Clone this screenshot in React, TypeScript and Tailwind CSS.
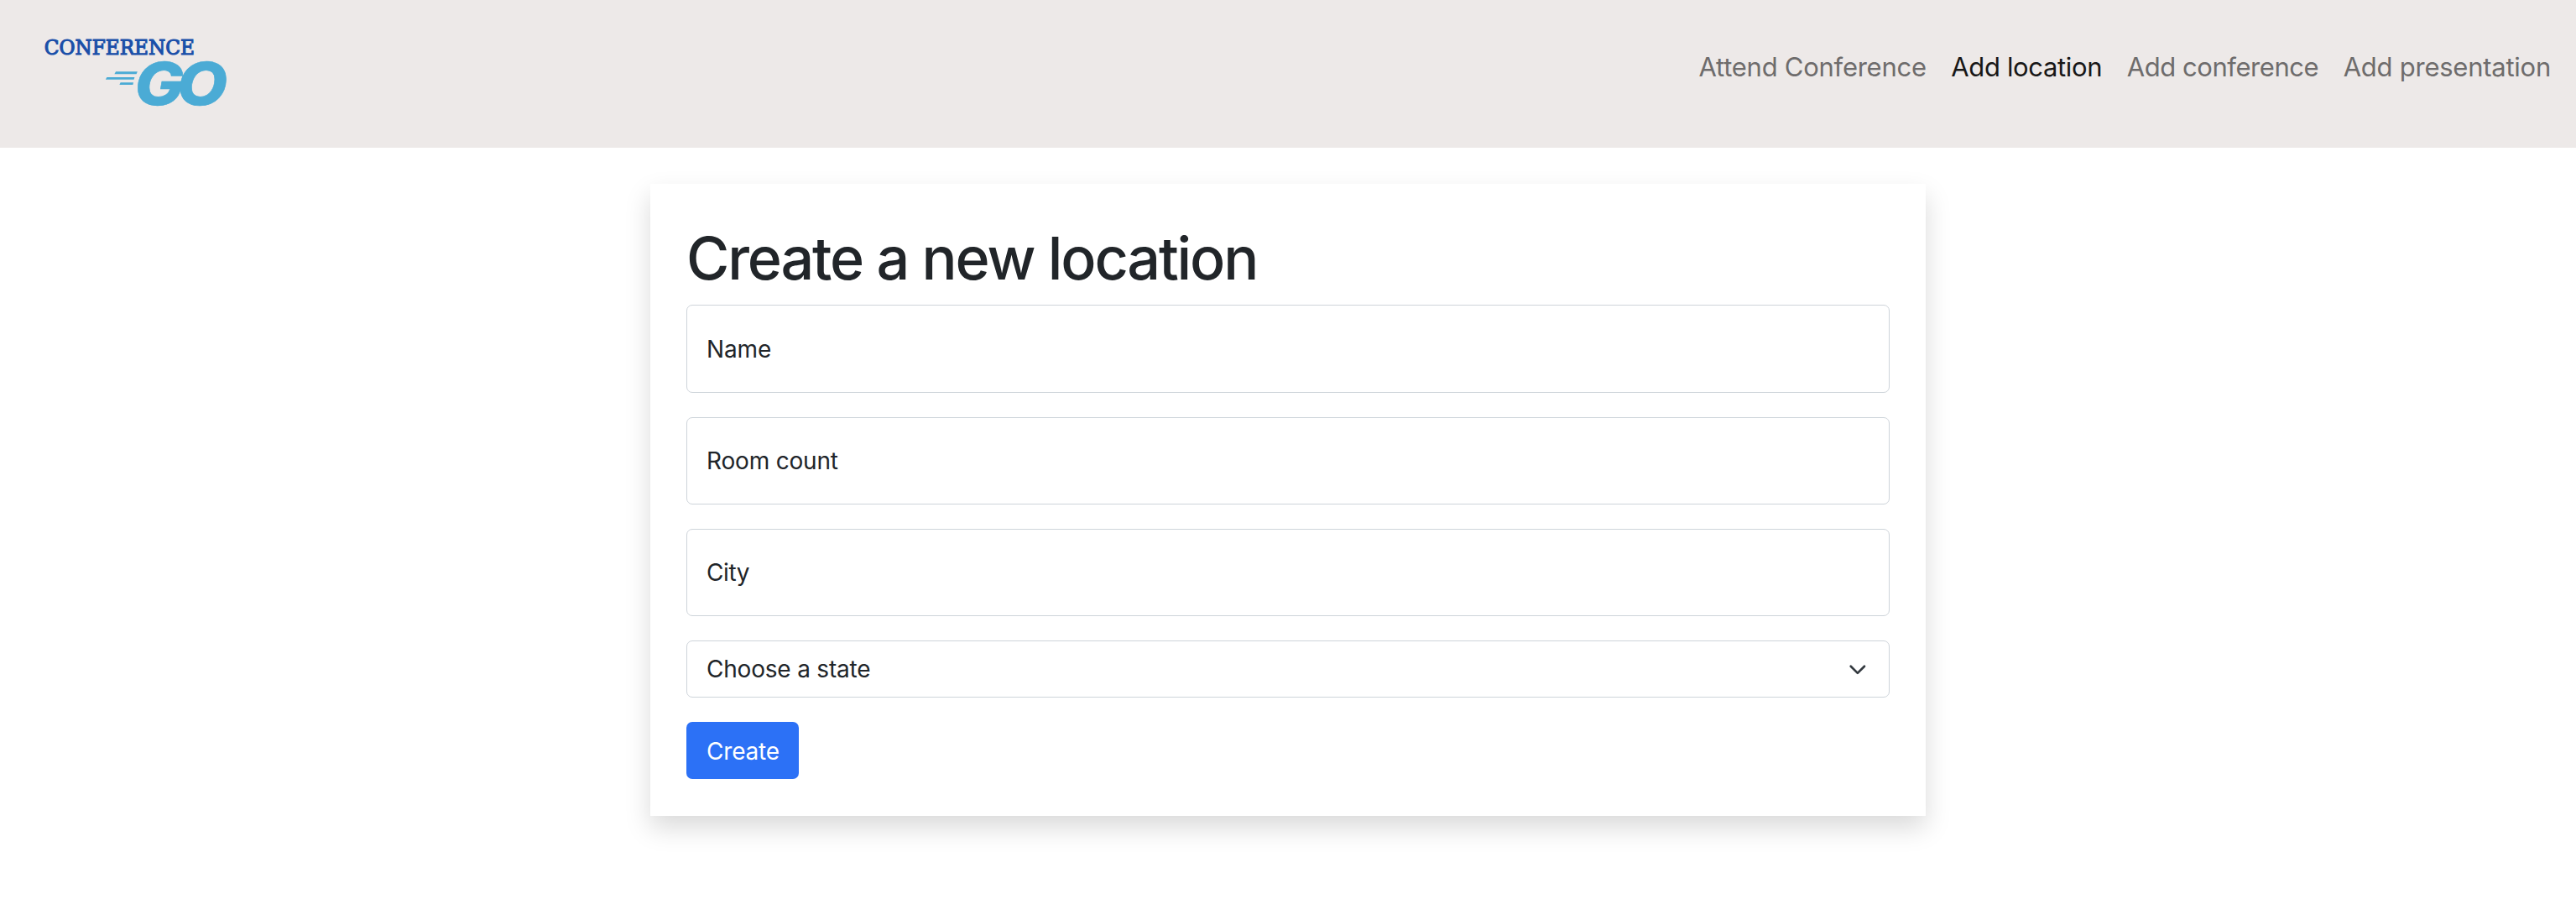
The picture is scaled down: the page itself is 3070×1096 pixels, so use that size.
const links = [
  { label: "Attend Conference", className: "tracking-[-0.26px] text-[#6e6c6c]" },
  { label: "Add location", className: "tracking-[-0.35px] text-[#181717]" },
  { label: "Add conference", className: "tracking-[-0.44px] text-[#6e6c6c]" },
  { label: "Add presentation", className: "tracking-[-0.25px] text-[#6e6c6c]" },
];

const fields = [
  { label: "Name", className: "h-[105px] mb-[29px] tracking-[-0.1px]" },
  { label: "Room count", className: "h-[104px] mb-[29px] tracking-[-0.18px]" },
  { label: "City", className: "h-[104px] mb-[29px] tracking-[-0.4px]" },
];

function Logo() {
  return (
    <svg width="240" height="120" viewBox="50 30 240 120" role="img" aria-label="Conference GO">
      <text
        x="52.8"
        y="64.8"
        textLength="179"
        lengthAdjust="spacingAndGlyphs"
        fontSize="25"
        fill="#1a4fa9"
        stroke="#1a4fa9"
        strokeWidth="1.2"
        className="font-['DejaVu_Serif']"
      >
        CONFERENCE
      </text>
      <g fill="#4babd5">
        <path d="M138 85.3H163.8L162.6 88.3H136.4Z" />
        <path d="M127.4 92H160.4L159.6 94.8H125.8Z" />
        <path d="M143.6 98.3H159L158.4 101H142.4Z" />
        <text
          transform="scale(1.1 1)"
          x="145.9 191.8"
          y="124.6"
          fontSize="70.5"
          stroke="#4babd5"
          strokeWidth="0.6"
          className="font-[Inter] font-extrabold italic"
        >
          GO
        </text>
      </g>
    </svg>
  );
}

export default function App() {
  return (
    <div className="flex min-h-[1096px] flex-col items-center bg-white font-[Inter,sans-serif] text-[#212529]">
      <header className="flex h-[176px] w-full items-start justify-between bg-[#ede9e8] pr-[30px] pl-[50px]">
        <a className="mt-[30px] block">
          <Logo />
        </a>
        <nav className="mt-[56px] flex gap-[29.5px] text-[31px] leading-[48px]">
          {links.map((l) => (
            <a key={l.label} className={l.className}>
              {l.label}
            </a>
          ))}
        </nav>
      </header>
      <main className="mt-[43px] h-[753px] w-[1520px] bg-white px-[43px] pt-[43px] shadow-[0_14px_29px_rgba(0,0,0,0.15)]">
        <h1 className="mb-[10px] text-[70px] leading-[91px] font-medium tracking-[-2.15px]">
          Create a new location
        </h1>
        <form className="flex flex-col items-start text-[28px] leading-[42px]">
          {fields.map((f) => (
            <label
              key={f.label}
              className={`flex w-full items-center rounded-[7px] border border-[#ced4da] pl-[23px] ${f.className}`}
            >
              {f.label}
            </label>
          ))}
          <div className="mb-[29px] flex h-[68px] w-full items-center justify-between rounded-[7px] border border-[#ced4da] pr-[26px] pl-[23px] tracking-[-0.2px]">
            <span>Choose a state</span>
            <svg className="mt-px" width="21.7" height="21.7" viewBox="0 0 16 16" fill="none" stroke="#343a40" strokeWidth="2" strokeLinecap="round" strokeLinejoin="round">
              <path d="m2 5 6 6 6-6" />
            </svg>
          </div>
          <button type="button" className="h-[68px] w-[134px] rounded-[7px] bg-[#2c71f6] pt-px pl-[24px] text-left tracking-[-0.2px] text-white">
            Create
          </button>
        </form>
      </main>
    </div>
  );
}
